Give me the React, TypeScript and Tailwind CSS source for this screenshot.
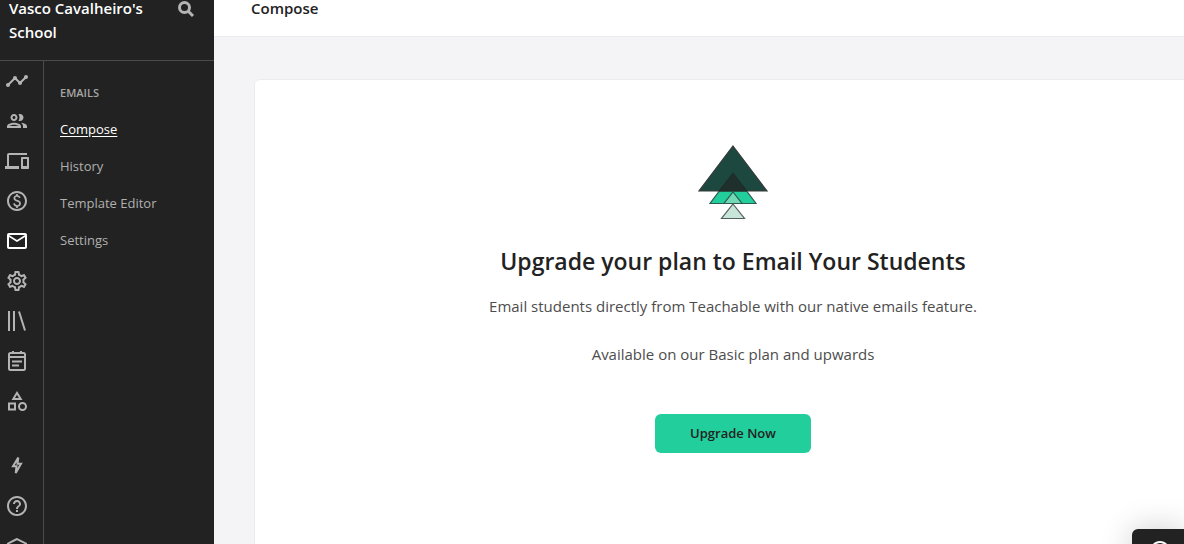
import type { ReactNode } from "react";
import {
  MdHelpOutline,
  MdMailOutline,
  MdOutlineCategory,
  MdOutlineDevices,
  MdOutlinePaid,
  MdOutlineSettings,
  MdTimeline,
} from "react-icons/md";

interface RailItem {
  label: string;
  icon: ReactNode;
  active?: boolean;
}

function LineIcon({ children, strokeWidth = 2 }: { children: ReactNode; strokeWidth?: number }) {
  return (
    <svg
      width="24"
      height="24"
      viewBox="0 0 24 24"
      fill="none"
      stroke="currentColor"
      strokeWidth={strokeWidth}
      aria-hidden="true"
    >
      {children}
    </svg>
  );
}

function PeopleIcon() {
  return (
    <svg width="24" height="24" viewBox="0 0 24 24" fill="currentColor" aria-hidden="true">
      <path d="M9 13.75c-2.34 0-7 1.17-7 3.5V19h14v-1.75c0-2.33-4.66-3.5-7-3.5zM4.34 17c.84-.58 2.87-1.25 4.66-1.25s3.82.67 4.66 1.25H4.34zM9 12c1.93 0 3.5-1.57 3.5-3.5S10.93 5 9 5 5.5 6.57 5.5 8.5 7.07 12 9 12zm0-5c.83 0 1.5.67 1.5 1.5S9.83 10 9 10s-1.5-.67-1.5-1.5S8.17 7 9 7zm7.04 6.81c1.16.84 1.96 1.96 1.96 3.44V19h4v-1.75c0-2.02-3.5-3.17-5.96-3.44zM15 12c1.93 0 3.5-1.57 3.5-3.5S16.93 5 15 5c-.54 0-1.04.13-1.5.35.63.89 1 1.98 1 3.15s-.37 2.26-1 3.15c.46.22.96.35 1.5.35z" />
    </svg>
  );
}

function LibraryIcon() {
  return (
    <LineIcon>
      <path d="M4 2v20M9 2v20M14 2.5l6 19" />
    </LineIcon>
  );
}

function NotesIcon() {
  return (
    <LineIcon>
      <rect x="4" y="4" width="16" height="17" rx="1.5" />
      <path d="M4 8h16M8 2v3M16 2v3M7 12.500h10M7 16.500h7" />
    </LineIcon>
  );
}

function BoltIcon() {
  return (
    <LineIcon strokeWidth={2}>
      <path d="M13.300 4.500 8 13.200H11.500L10.700 20 16 10.800H12.500Z" />
    </LineIcon>
  );
}

function AcademyIcon() {
  return (
    <LineIcon>
      <path d="M12 4 3 8.500V16l9 4.500 9-4.500V8.500Z" />
    </LineIcon>
  );
}

const mainItems: RailItem[] = [
  { label: "Dashboard", icon: <MdTimeline size={24} /> },
  { label: "Users", icon: <PeopleIcon /> },
  { label: "Site", icon: <MdOutlineDevices size={24} /> },
  { label: "Sales", icon: <MdOutlinePaid size={24} /> },
  { label: "Emails", icon: <MdMailOutline size={24} />, active: true },
  { label: "Settings", icon: <MdOutlineSettings size={24} /> },
  { label: "Courses", icon: <LibraryIcon /> },
  { label: "Coaching", icon: <NotesIcon /> },
  { label: "Products", icon: <MdOutlineCategory size={24} /> },
];

const footerItems: RailItem[] = [
  { label: "What's new", icon: <BoltIcon /> },
  { label: "Help", icon: <MdHelpOutline size={24} /> },
  { label: "Academy", icon: <AcademyIcon /> },
];

const links = ["Compose", "History", "Template Editor", "Settings"];

function RailLink({ item }: { item: RailItem }) {
  return (
    <li>
      <a
        href="#"
        aria-label={item.label}
        className={item.active ? "block text-white" : "block text-[#b4b4b4] hover:text-white"}
      >
        {item.icon}
      </a>
    </li>
  );
}

function Sidebar() {
  return (
    <aside className="flex w-[214px] shrink-0 flex-col bg-[#222222]">
      <div className="-mt-1 flex items-start justify-between border-b border-[#4b4b4b] pb-4 pl-[9px] pr-4">
        <p className="w-36 text-[15px] font-semibold leading-6 text-white">
          Vasco Cavalheiro&apos;s School
        </p>
        <button aria-label="Search" className="text-[#b4b4b4]">
          <LineIcon strokeWidth={3}>
            <circle cx="10.500" cy="11.500" r="5" />
            <path d="m14 15 5 5" />
          </LineIcon>
        </button>
      </div>
      <div className="flex flex-1">
        <nav
          aria-label="Main"
          className="flex w-11 flex-col gap-10 border-r border-[#4b4b4b] pl-[5px] pt-2"
        >
          <ul className="flex flex-col gap-4">
            {mainItems.map((item) => (
              <RailLink key={item.label} item={item} />
            ))}
          </ul>
          <ul className="flex flex-col gap-[17px]">
            {footerItems.map((item) => (
              <RailLink key={item.label} item={item} />
            ))}
          </ul>
        </nav>
        <nav aria-label="Emails" className="flex-1 pl-4 pt-6">
          <h2 className="text-[11px] font-semibold leading-4 text-[#a6a6a6]">EMAILS</h2>
          <ul className="mt-4 flex flex-col gap-[13px]">
            {links.map((link) => (
              <li key={link} className="text-[13px] leading-6">
                <a
                  href="#"
                  className={
                    link === "Compose"
                      ? "text-white underline underline-offset-2"
                      : "text-[#b0b0b0] hover:text-white"
                  }
                >
                  {link}
                </a>
              </li>
            ))}
          </ul>
        </nav>
      </div>
    </aside>
  );
}

function TreeLogo() {
  return (
    <svg width="72" height="76" viewBox="0 0 72 76" strokeWidth="1.2" aria-hidden="true">
      <path d="M36 29 59 59.500H13Z" fill="#22ce9c" stroke="#2b5a4e" />
      <path d="M36 2 70 47H2Z" fill="#1c483f" stroke="#353b39" />
      <path d="M36 29 50 47H22Z" fill="#1f2f2c" stroke="#1f2b29" strokeWidth="1" />
      <path d="M36 48 45 59.500H27Z" fill="#72d8b5" stroke="#2b5a4e" />
      <path d="M36 60 47.500 74.500H24.500Z" fill="#c7e5d9" stroke="#555f5b" />
    </svg>
  );
}

export default function App() {
  return (
    <div className="flex h-screen overflow-hidden bg-[#f4f4f7] font-['Open_Sans',sans-serif] text-[#222222]">
      <Sidebar />
      <main className="flex min-w-0 flex-1 flex-col">
        <header className="border-b border-[#ececf0] bg-white pb-5 pl-[37px]">
          <h1 className="text-[15px] font-semibold leading-4">Compose</h1>
        </header>
        <section className="-mb-4 -mr-7 ml-10 mt-[42px] flex flex-1 flex-col items-center rounded-md border border-[#ececf0] bg-white pt-16">
          <TreeLogo />
          <h2 className="mt-6 text-[23px] font-semibold leading-[34px]">
            Upgrade your plan to Email Your Students
          </h2>
          <p className="mt-4 text-[15px] leading-6 text-[#4d4d4d]">
            Email students directly from Teachable with our native emails feature.
          </p>
          <p className="mt-6 text-[15px] leading-6 text-[#4d4d4d]">
            Available on our Basic plan and upwards
          </p>
          <button className="mt-12 rounded-md bg-[#22ce9c] px-[35px] py-2 text-[13px] font-semibold leading-[23px]">
            Upgrade Now
          </button>
        </section>
      </main>
      <button
        aria-label="Open help chat"
        className="fixed -bottom-[25px] right-0 flex h-10 w-[52px] justify-center rounded-tl-md bg-[#222222] pl-1 pt-[10px] text-white shadow-[0_0_32px_rgba(0,0,0,0.2)]"
      >
        <MdHelpOutline size={24} />
      </button>
    </div>
  );
}
